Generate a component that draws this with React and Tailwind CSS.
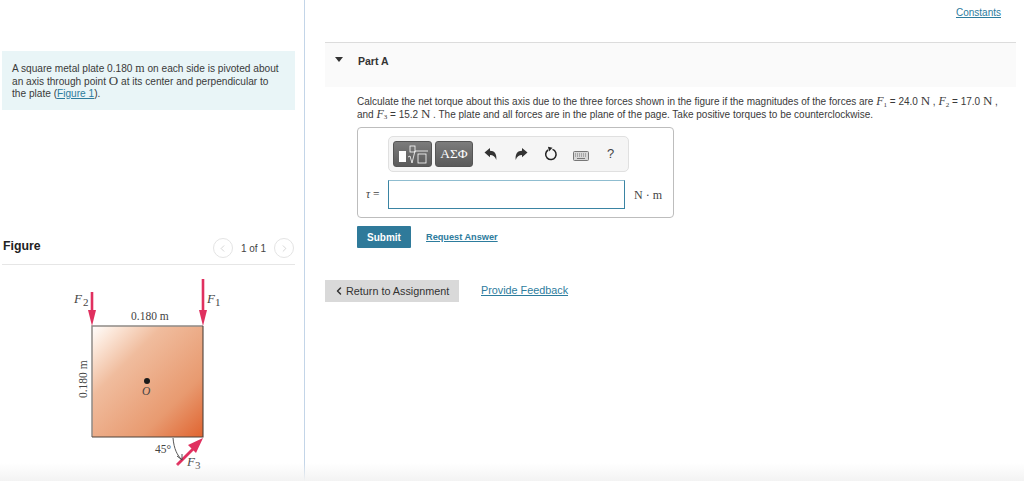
import { ChevronLeft, ChevronRight } from 'lucide-react';

const sans = "font-['Liberation_Sans',Arial,sans-serif]";
const serif = "font-['Liberation_Serif','Times_New_Roman',serif]";

function Figure() {
  return (
    <svg width="305" height="216" viewBox="0 265 305 216" className="block">
      <defs>
        <linearGradient id="plate" x1="0" y1="0" x2="1" y2="1">
          <stop offset="0" stopColor="#fffefd" />
          <stop offset="0.12" stopColor="#fbe6d8" />
          <stop offset="0.32" stopColor="#f0bc9d" />
          <stop offset="0.72" stopColor="#e89a70" />
          <stop offset="1" stopColor="#e06430" />
        </linearGradient>
      </defs>
      <rect x="92" y="326" width="111" height="111" fill="url(#plate)" />
      <path d="M92 437V326H203" fill="none" stroke="#8f8a86" strokeWidth="1.5" />
      <path d="M92 437H203V326" fill="none" stroke="#4f423b" strokeWidth="1.1" />
      <circle cx="147" cy="381" r="3" fill="#1a1a1a" />
      {/* forces */}
      <path d="M92 292V312" stroke="#e0305f" strokeWidth="2.6" />
      <path d="M88 310H96L92 326Z" fill="#e0305f" />
      <path d="M203 279V312" stroke="#e0305f" strokeWidth="2.6" />
      <path d="M199 310H207L203 326Z" fill="#e0305f" />
      <path d="M177 465L194 448" stroke="#e0305f" strokeWidth="2.8" />
      <path d="M203 438L196 453L188 445Z" fill="#e0305f" />
      <path d="M173 438C174 449 177 455 182 460" fill="none" stroke="#444" strokeWidth="0.9" />
      <path d="M177 456L182 460L182 454" fill="none" stroke="#444" strokeWidth="0.9" />
      <g className={serif} fill="#444" fontSize="11.5">
        <text x="131" y="320">0.180 m</text>
        <text transform="translate(87 398) rotate(-90)">0.180 m</text>
        <text x="155" y="453" fontSize="11.5">45°</text>
        <text x="142" y="395" fontSize="11.5" fontStyle="italic">O</text>
        <text x="74" y="303" fontSize="13" fontStyle="italic">F</text>
        <text x="83" y="306" fontSize="11">2</text>
        <text x="207" y="303" fontSize="13" fontStyle="italic">F</text>
        <text x="215" y="306" fontSize="11">1</text>
        <text x="187" y="466" fontSize="13" fontStyle="italic">F</text>
        <text x="195" y="469" fontSize="11">3</text>
      </g>
    </svg>
  );
}

function Pager({ children }) {
  return (
    <span className="w-[20px] h-[20px] rounded-full border border-[#e4e4e4] flex items-center justify-center text-[#b5b5b5]">
      {children}
    </span>
  );
}

function Force({ n }) {
  return (
    <>
      <i className={`${serif} text-[12px] leading-none`}>F</i>
      <sub className={`${serif} text-[7px] leading-none`}>{n}</sub>
    </>
  );
}

function Newton() {
  return <span className={`${serif} text-[13px] leading-none`}>N</span>;
}

function Toolbar() {
  return (
    <div className="w-[241px] h-[36px] ml-[30px] mt-[8px] bg-[#f5f5f5] border border-[#e0e0e0] rounded-[5px] flex items-center pl-[4px]">
      <div className="w-[39px] h-[26px] rounded-[3px] border border-[#555] bg-gradient-to-b from-[#7c7c7c] to-[#5a5a5a] flex items-center justify-center">
        <svg width="35" height="22" viewBox="0 0 35 22">
          <rect x="4" y="8" width="7" height="11" fill="#fff" />
          <rect x="15" y="3" width="5" height="6" fill="none" stroke="#fff" strokeWidth="0.8" />
          <path d="M13 14L15 13L17 20L20 8H33" fill="none" stroke="#fff" strokeWidth="0.8" />
          <rect x="23" y="11" width="8" height="9" fill="none" stroke="#fff" strokeWidth="0.8" />
        </svg>
      </div>
      <div className={`w-[38px] h-[26px] ml-[3px] rounded-[3px] border border-[#555] bg-gradient-to-b from-[#7c7c7c] to-[#5a5a5a] flex items-center justify-center text-white text-[13.5px] ${serif}`}>
        ΑΣΦ
      </div>
      <svg width="14" height="14" viewBox="0 0 14 14" className="ml-[11px]">
        <path d="M0.5 5.5L6 1V3.8C10.5 3.8 13 7 12.3 13C11.2 9.6 9 8 6 8V10.3Z" fill="#333" />
      </svg>
      <svg width="14" height="14" viewBox="0 0 14 14" className="ml-[16px]">
        <path d="M13.5 5.5L8 1V3.8C3.5 3.8 1 7 1.7 13C2.8 9.6 5 8 8 8V10.3Z" fill="#333" />
      </svg>
      <svg width="14" height="16" viewBox="0 0 14 16" className="ml-[16px]">
        <path d="M8.5 3.4A5.2 5.2 0 1 1 4 4" fill="none" stroke="#222" strokeWidth="1.5" />
        <path d="M4 0.8L8.5 1.8L5 5.5Z" fill="#222" />
      </svg>
      <svg width="16" height="10" viewBox="0 0 16 10" className="ml-[15px] mt-[3px]">
        <rect x="0.5" y="0.5" width="15" height="9" rx="1" fill="#d8d8d8" stroke="#777" />
        <path d="M2 3H14M2 5H14" stroke="#777" strokeWidth="1" strokeDasharray="1 1" />
        <path d="M4 7.5H12" stroke="#777" />
      </svg>
      <span className={`ml-[18px] text-[13px] text-[#444] ${sans}`}>?</span>
    </div>
  );
}

export default function App() {
  return (
    <div className={`relative flex w-[1024px] h-[481px] overflow-hidden bg-white text-[#333] ${sans}`}>
      {/* left pane */}
      <div className="w-[305px] shrink-0 border-r border-[#c3d5e8] pt-[51px] pl-[2px]">
        <div className="w-[293px] h-[59px] bg-[#e9f5f7] pl-[10px] pt-[11px] text-[10.15px] leading-[12.5px] text-[#3a3a3a]">
          <p className="h-[12px]">A square metal plate 0.180 <span className={`${serif} text-[12px] leading-none`}>m</span> on each side is pivoted about</p>
          <p className="h-[13px]">an axis through point <span className={`${serif} text-[13px] leading-none`}>O</span> at its center and perpendicular to</p>
          <p className="h-[12.5px] pt-[1px]">the plate (<span className="text-[#2d7c9d] underline">Figure 1</span>).</p>
        </div>

        <div className="w-[293px] h-[30px] mt-[125px] border-b border-[#e6e6e6] flex items-start justify-between">
          <h2 className="text-[12.3px] leading-[14px] font-bold text-[#222] ml-[1px] mt-[4px]">Figure</h2>
          <div className="flex items-center mt-[3px] mr-[1px] text-[10px] text-[#444]">
            <Pager><ChevronLeft size={11} strokeWidth={1.2} /></Pager>
            <span className="ml-[8px] mr-[8px]">1 of 1</span>
            <Pager><ChevronRight size={11} strokeWidth={1.2} /></Pager>
          </div>
        </div>
        <div className="-ml-[2px]">
          <Figure />
        </div>
      </div>

      {/* right pane */}
      <div className="flex-1 relative">
        <div className="h-[42px] pt-[7px] pr-[23px] flex justify-end items-start">
          <a className="block mr-[3px] text-[10px] leading-[12px] text-[#2d7c9d] underline">Constants</a>
        </div>

        <div className="w-[691px] h-[45px] ml-[20px] border-t border-[#dcdcdc] bg-[#fafafa] flex items-start pt-[12px]">
          <span className="ml-[10px] mt-[2px] w-0 h-0 border-l-[4px] border-r-[4px] border-t-[5px] border-l-transparent border-r-transparent border-t-[#333]"></span>
          <span className="ml-[15px] text-[10.5px] leading-[12px] font-bold text-[#333]">Part A</span>
        </div>

        <div className="ml-[52px] mt-[7px] h-[26px] w-[670px] text-[10px] leading-[12.5px] text-[#3a3a3a] whitespace-nowrap">
          <p className="h-[12.5px]">
            Calculate the net torque about this axis due to the three forces shown in the figure if the magnitudes of the forces are{' '}
            <Force n="1" /> = 24.0 <Newton /> , <Force n="2" /> = 17.0 <Newton /> ,
          </p>
          <p className="h-[12.5px]">
            and <Force n="3" /> = 15.2 <Newton /> . The plate and all forces are in the plane of the page. Take positive torques to be counterclockwise.
          </p>
        </div>

        <div className="ml-[52px] mt-[7px] w-[317px] h-[91px] border border-[#bdbdbd] rounded-[4px]">
          <Toolbar />
          <div className="flex items-center mt-[8px]">
            <span className={`ml-[8px] w-[22px] text-[11.5px] text-[#444] ${serif}`}><i>τ</i> =</span>
            <div className="w-[237px] h-[29px] border border-[#3a84a3] border-t-[#8fbdd0] bg-white"></div>
            <span className={`ml-[9px] text-[12px] text-[#444] ${serif}`}>N · m</span>
          </div>
        </div>

        <div className="ml-[52px] mt-[8px] flex items-center">
          <button className="w-[54px] h-[22px] bg-[#2f7a9a] text-white text-[10px] font-bold rounded-[1px]">Submit</button>
          <a className="ml-[15px] mt-[1px] text-[9.2px] font-bold text-[#2d7c9d] underline">Request Answer</a>
        </div>

        <div className="ml-[20px] mt-[32px] flex items-center">
          <button className="w-[134px] h-[22px] bg-[#d9d9d9] text-[#333] text-[10.8px] flex items-center pl-[9px]">
            <ChevronLeft size={12} strokeWidth={3} className="-ml-[1px] mr-[1px]" />
            Return to Assignment
          </button>
          <a className="ml-[22px] -mt-[2px] text-[10.8px] text-[#2d7c9d] underline">Provide Feedback</a>
        </div>
      </div>

      {/* bottom fade */}
      <div className="absolute left-0 right-0 bottom-0 h-[18px] bg-gradient-to-b from-transparent to-[#f3f3f3] pointer-events-none"></div>
    </div>
  );
}
